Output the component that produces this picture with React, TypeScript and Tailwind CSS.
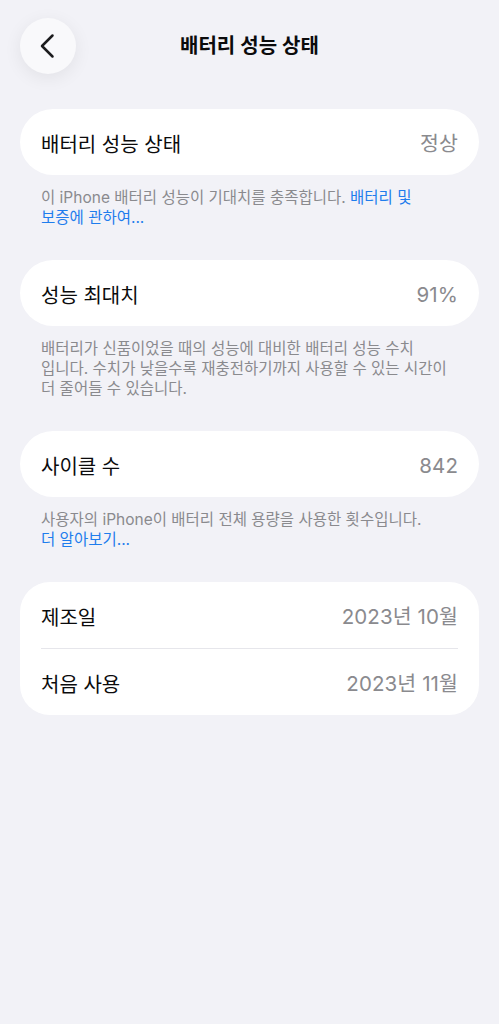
import React from 'react'

const font = { fontFamily: 'Inter, "Noto Sans CJK KR", sans-serif' }

function Row({ label, value }: { label: string; value: string }) {
  return (
    <div className="flex h-[66px] items-center justify-between px-[21px] pt-[5px]">
      <span className="text-[20px] text-[#0b0b0c]">{label}</span>
      <span className="text-[20.5px] text-[#8a8a8e] tracking-[0.1px]">{value}</span>
    </div>
  )
}

function Footer({ children }: { children: React.ReactNode }) {
  return (
    <p className="mt-[13px] mb-[32px] px-[21px] text-[15.5px] leading-[20px] text-[#8a8a8e] break-keep">
      {children}
    </p>
  )
}

export default function App() {
  return (
    <div className="min-h-[1024px] w-full bg-[#f2f2f7] px-[20px] pt-[18px]" style={font}>
      <div className="relative flex h-[56px] items-center justify-center">
        <button className="absolute left-0 top-0 flex h-[56px] w-[56px] items-center justify-center rounded-full bg-[#f9f9fb] shadow-[0_4px_18px_rgba(0,0,0,0.07)]">
          <svg width="18" height="26" viewBox="0 0 18 26" fill="none">
            <path d="M13.5 2.5L3 13l10.5 10.5" stroke="#1c1c1e" strokeWidth="2.5" strokeLinecap="round" strokeLinejoin="round" />
          </svg>
        </button>
        <h1 className="text-[20px] font-semibold text-[#0b0b0c]">배터리 성능 상태</h1>
      </div>

      <div className="mt-[35px] rounded-full bg-white">
        <Row label="배터리 성능 상태" value="정상" />
      </div>
      <Footer>
        이 iPhone 배터리 성능이 기대치를 충족합니다. <span className="text-[#1f7ded]">배터리 및<br />보증에 관하여...</span>
      </Footer>

      <div className="rounded-full bg-white">
        <Row label="성능 최대치" value="91%" />
      </div>
      <Footer>
        배터리가 신품이었을 때의 성능에 대비한 배터리 성능 수치
        <br />
        입니다. 수치가 낮을수록 재충전하기까지 사용할 수 있는 시간이
        <br />
        더 줄어들 수 있습니다.
      </Footer>

      <div className="rounded-full bg-white">
        <Row label="사이클 수" value="842" />
      </div>
      <Footer>
        사용자의 iPhone이 배터리 전체 용량을 사용한 횟수입니다.
        <br />
        <span className="text-[#1f7ded]">더 알아보기...</span>
      </Footer>

      <div className="mt-[1px] rounded-[30px] bg-white">
        <Row label="제조일" value="2023년 10월" />
        <div className="mx-[21px] h-px bg-[#e6e6eb]" />
        <Row label="처음 사용" value="2023년 11월" />
      </div>
    </div>
  )
}
